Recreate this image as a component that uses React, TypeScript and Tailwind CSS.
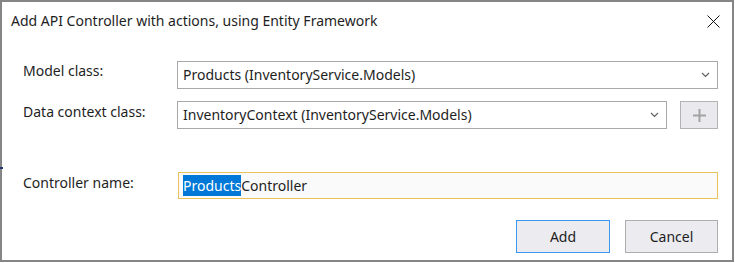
import React from "react";

const font = { fontFamily: '"Segoe UI", "Noto Sans", "Open Sans", sans-serif' };

function Chevron() {
  return (
    <svg width="9" height="6" viewBox="0 0 9 6" className="shrink-0">
      <path d="M1 1 L4.5 4.5 L8 1" fill="none" stroke="#606060" strokeWidth="1.2" />
    </svg>
  );
}

function Combo({ text, className }: { text: string; className: string }) {
  return (
    <div
      className={`h-[28px] border border-[#a9a9a9] bg-white flex items-center justify-between pl-[5px] pr-[7px] text-[14px] text-[#1e1e1e] ${className}`}
    >
      <span className="leading-[20px]">{text}</span>
      <Chevron />
    </div>
  );
}

export default function App() {
  return (
    <div
      className="w-[734px] h-[262px] border-2 border-[#858585] bg-white flex flex-col relative"
      style={font}
    >
      <div className="h-[38px] flex items-center justify-between pl-[9px] pr-[12px]">
        <span className="text-[14px] text-[#1e1e1e] leading-[20px]">
          Add API Controller with actions, using Entity Framework
        </span>
        <svg width="13" height="13" viewBox="0 0 13 13">
          <path d="M0.5 0.5 L12.5 12.5 M12.5 0.5 L0.5 12.5" stroke="#111" strokeWidth="1" />
        </svg>
      </div>

      <div className="pl-[21px] pr-[14px] mt-[21px] flex flex-col">
        <div className="flex items-start">
          <div className="w-[154px] text-[14px] text-[#1e1e1e] leading-[20px] mt-[0px]">Model class:</div>
          <Combo text="Products (InventoryService.Models)" className="flex-1" />
        </div>
        <div className="flex items-start mt-[12px]">
          <div className="w-[154px] text-[14px] text-[#1e1e1e] leading-[20px] mt-[1px]">Data context class:</div>
          <Combo text="InventoryContext (InventoryService.Models)" className="w-[490px]" />
          <div className="ml-[13px] w-[38px] h-[28px] border border-[#b4b4b4] bg-[#e9e9ee] flex items-center justify-center">
            <svg width="13" height="13" viewBox="0 0 13 13">
              <path d="M6.5 0 V13 M0 6.5 H13" stroke="#a3a3a3" strokeWidth="2" />
            </svg>
          </div>
        </div>

        <div className="flex items-start mt-[43px]">
          <div className="w-[155px] text-[14px] text-[#1e1e1e] leading-[20px] mt-[1px]">Controller name:</div>
          <div className="flex-1 h-[27px] border border-[#e8c25a] bg-[#fafafa] flex items-center pl-[4px] text-[14px] text-[#1e1e1e]">
            <span className="bg-[#0078d7] text-white leading-[21px]">Products</span>
            <span className="leading-[21px]">Controller</span>
          </div>
        </div>

        <div className="flex justify-end gap-[15px] mt-[21px]">
          <button className="w-[94px] h-[33px] border border-[#3d96ef] bg-[#ececf0] text-[14px] text-[#1e1e1e]">
            Add
          </button>
          <button className="w-[93px] h-[33px] border border-[#adadad] bg-[#ececf0] text-[14px] text-[#1e1e1e]">
            Cancel
          </button>
        </div>
      </div>

      <div className="absolute left-[-2px] top-[165px] w-[3px] h-[2px] bg-[#1f3a6e]" />
    </div>
  );
}
